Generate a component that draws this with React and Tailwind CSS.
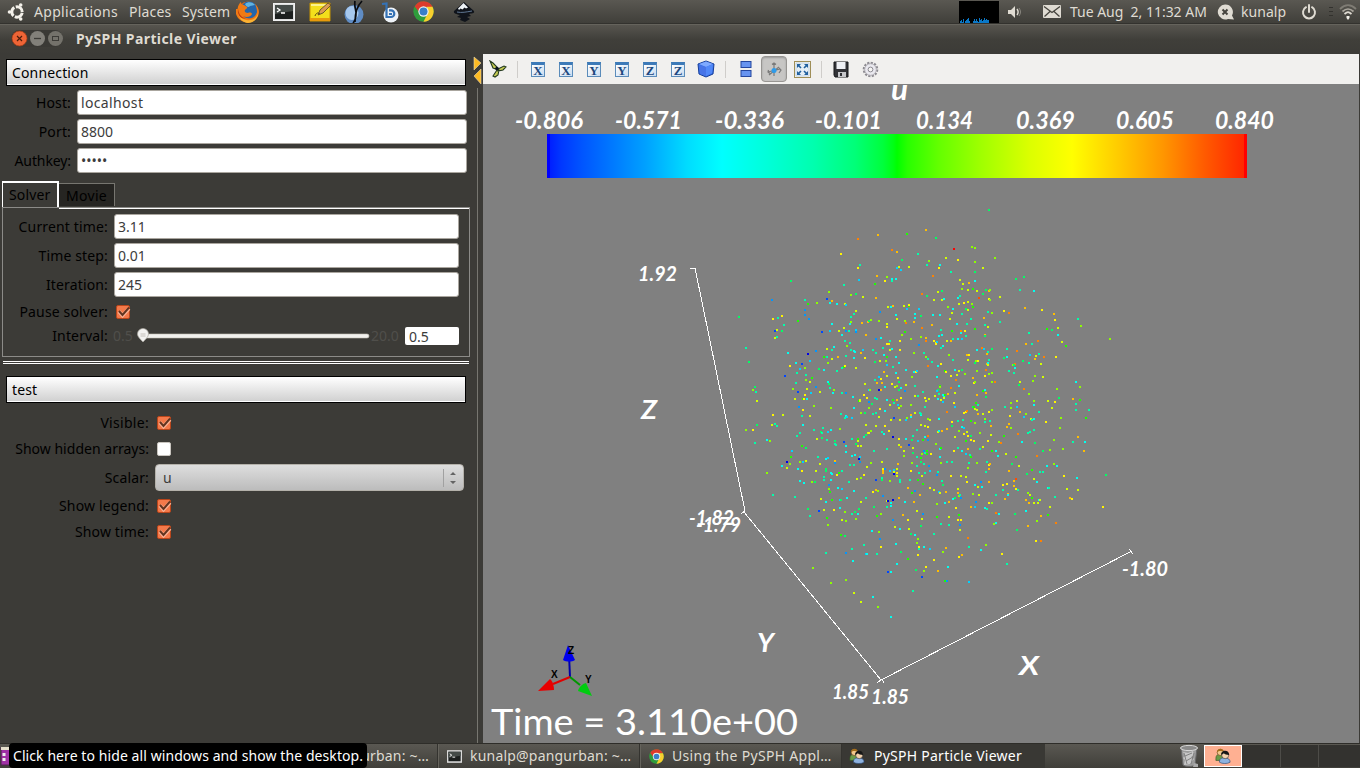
import React from "react";

const PALETTE = {
  d: "#0000e6", b: "#0046ff", a: "#0096ff", s: "#00d2ff", c: "#00fff0",
  t: "#00ffaa", e: "#00ff64", g: "#1eff00", l: "#8cff00", v: "#d2ff00",
  y: "#fff500", o: "#ffbe00", r: "#ff8200", R: "#ff4b00", X: "#ff0000",
};

/* Particle samples per tile: origin in pixels, points in thirds of a pixel. */
const TILES = [
  [730, 200, "384,117r 444,105o 531,102g 333,162y 486,150r 501,156o 564,162t 516,180e 390,195t 384,204y 387,240s 342,255t 435,252g 441,228o 465,243y 471,231l 486,237c 486,243t 498,237c 501,204s 507,201v 513,210s 537,201v 183,243e 126,300a 225,300t 234,312g 261,309l 297,276l 291,297b 306,303o 300,309c 321,312c 345,312v 348,315s 363,285l 378,282e 399,291v 438,294o 27,351e 129,357y 144,354t 156,348y 162,375t 204,363g 225,330a 225,345a 237,357a 135,393b 141,390v 156,393e 135,414v 141,411t 276,396b 300,393s 306,372c 342,384v 327,393v 348,393a 357,393t 336,405c 363,351t 372,342t 378,333v 363,366l 360,372c 378,390s 378,396a 396,369o 414,366o 417,363e 423,360l 447,363l 450,336a 474,321v 483,321c 489,318o 471,372v 471,381y 498,345c 501,357v 522,318v 537,318g 537,315y 531,327s 555,342c 555,354c 567,327s 525,363l 528,369r 552,366o 48,444t 57,486e 75,561e 69,570l 78,576t 81,603v 174,459c 165,528b 180,498y 198,489c 210,507s 216,492b 225,504l 201,519t 234,462d 240,483s 258,453a 228,525t 228,540l 240,546v 246,534g 198,549t 189,567l 204,576b 225,585y 231,567v 195,597v 219,597g 222,597y 231,597c 242,579s 258,561a 270,576v 267,507e 282,510c 282,471g 291,447v 291,471t 294,489l 306,450t 306,477v 312,441c 324,471o 348,468t 372,474c 321,513t 336,504t 342,501g 345,498y 345,423t 351,438l 360,429t 363,450t 372,453c 375,456c 393,459o 399,450s 408,405o 405,474y 429,450t 438,459t 435,486e 438,417a 453,414c 378,504v 294,546c 297,552e 300,564t 312,570l 309,579c 336,579t 348,579a 369,591c 390,600v 405,552v 402,585y 411,594y 417,570s 420,570l 435,594t 441,597t 447,531s 435,540t 441,549o 453,537y 456,549o 447,570d 453,570o 465,561c 450,483v 462,465c 459,444t 471,432y 477,432y 480,423t 480,450v 486,447c 471,471g 468,483l 471,495s 498,471c 507,489c 489,501t 462,516o 471,528v 498,519c 504,534y 486,552y 495,561v 501,558l 507,546e 507,570e 513,564c 525,573a 528,555v 546,531l 528,510c 552,516c 558,516y 561,513s 555,558t 555,588v 564,588t 513,594y 501,600o 489,600g 471,600c 516,405l 543,417l 525,396g 510,423y 510,450y 552,459l 567,435a"],
  [920, 200, "207,30e 18,90o 48,114e 102,147X 156,141l 165,144l 27,183l 78,174v 114,180y 225,174l 165,186l 21,195t 60,195c 57,204y 93,216t 165,216e 189,204v 39,228r 120,240v 129,252v 147,249o 165,243c 126,267l 144,270v 159,267g 171,273v 189,282e 198,270e 207,273o 210,270l 54,276v 66,273e 6,282r 21,288e 42,300v 66,300v 72,297c 114,294c 120,288t 177,294R 207,297y 210,300l 240,291v 288,237e 312,231e 300,270t 342,273c 117,312v 132,309y 144,306v 156,312l 159,321g 84,321l 99,327c 138,327e 144,330v 96,339v 126,342t 204,336t 216,339l 252,333y 267,339r 315,324o 366,330y 402,342o 405,360y 3,348e 39,345c 60,345c 90,357v 153,357t 192,354o 240,366t 111,372c 141,372t 36,375o 6,384r 63,390t 96,393g 123,393r 123,399c 135,393y 165,387g 195,375t 204,381v 195,405o 195,408e 138,408t 66,405c 57,408c 3,411l 18,414o 18,423r 42,423y 48,429y 48,432y 51,426s 81,423v 93,423o 99,417t 114,417c 126,417s 69,438c 63,444t 381,387g 396,390e 414,384v 414,405c 327,399t 354,423r 318,432o 336,432t 426,426v 438,438g 474,357t 483,378l 570,417l 12,459t 18,471l 24,477t 24,498r 36,486t 54,498c 63,492y 87,465l 99,480t 141,465o 147,465y 144,480v 171,450c 186,444r 192,447s 201,462o 204,456t 216,447e 165,489e 168,483l 174,483y 207,480t 201,492o 204,489c 204,495v 252,474e 261,447t 261,471c 291,453r 285,492r 279,495l 282,495e 285,504c 267,513t 282,519t 309,483e 327,489t 330,465s 348,468v 345,477o 357,462t 372,471r 363,492v 408,471y 75,513g 78,516y 105,510c 117,513v 126,510e 135,522l 93,528y 111,525v 108,540r 51,531c 171,513l 198,510r 207,522l 216,519l 195,528y 159,534o 162,549y 165,546l 216,546l 225,546r 117,558c 93,564r 60,558g 60,561l 54,570e 51,573s 57,582t 69,585c 72,591c 75,585g 84,582o 72,594v 63,600v 69,606s 54,597c 45,588v 15,594y 18,603v 27,597v 9,576t 105,579v 102,609y 189,573g 195,570c 198,579o 198,591e 171,585o 168,609g 300,546v 297,555e 312,567r 339,543l 345,528l 369,531v 327,582l 411,567l 417,594e 384,603v 405,606y 342,603v 291,603v 273,609l 468,546c 480,561l 480,600g 459,597o"],
  [730, 400, "207,21a 219,30y 252,18l 216,48t 240,48v 303,24l 333,42t 348,48c 351,51s 345,54t 366,54s 372,24c 387,3g 390,3v 393,39l 417,6a 426,12e 417,24l 405,39e 429,42t 438,39t 450,27y 465,33c 447,51v 471,0c 480,15v 492,9t 504,15s 507,24v 513,18l 492,54b 483,60v 510,60v 528,60s 531,54l 543,45o 543,51c 543,15l 555,39v 570,39t 573,45c 129,45y 159,45v 81,75e 126,75v 135,72t 141,78t 48,90l 69,90y 75,129t 111,120c 120,123l 219,75c 210,99t 201,108t 228,144e 216,138g 252,90t 279,84t 273,96e 276,99t 294,96s 303,90c 330,87l 261,117v 276,114e 291,120t 315,123e 315,132t 318,135t 342,126b 348,138c 366,117t 384,117g 378,132e 384,138v 393,138v 384,123v 402,111t 408,105e 408,75v 414,99v 417,99y 423,93l 438,78v 465,78y 456,96t 462,102c 477,93y 489,111d 507,117y 507,135v 513,141o 522,153v 537,135b 549,144v 546,120e 549,108t 561,90t 564,123s 528,117c 186,153s 183,171g 171,186d 180,192l 171,204v 156,198c 111,219l 210,186l 219,186s 228,183v 204,207c 216,213y 210,243c 222,249c 129,285t 195,291t 264,171t 270,192v 288,177c 294,174s 315,183o 315,189a 288,207e 288,213e 303,219c 306,222c 321,225y 327,219g 336,213t 282,231t 282,240t 303,240c 246,246l 255,246e 258,213v 297,255a 297,267l 300,276g 324,264c 336,267s 357,246t 372,273c 348,156c 360,195t 372,195t 366,168c 375,165c 387,177d 390,171s 390,186a 432,153t 423,189l 411,201v 402,225y 393,234l 381,237v 438,240b 456,186v 471,147t 459,207y 465,207a 459,213o 459,219o 480,213s 492,210s 492,216v 492,222d 501,207v 504,192o 501,219y 501,228v 480,243l 456,234t 456,240e 510,240t 510,246t 522,168l 546,189l 549,159e 561,171t 573,186e 561,198t 543,213y 567,219t 540,240t 564,240g 429,276y 438,270o 444,273l 459,288a 471,303v 474,303d 483,309c 483,318c 489,300d 507,294o 534,264o 555,273a 546,279g 570,285o 552,306o 525,306c 408,294t 393,306v 351,294c 330,300s 333,300e 330,324c 306,300g 273,297v 288,306c 234,327e 240,348t 267,333b 282,330v 312,330y 345,336l 336,360v 348,363l 291,354g 294,375l 366,342t 375,336e 384,342c 387,327e 378,357l 432,321e 441,348g 453,342l 471,321t 519,345o 489,360a 495,381v 510,387c 534,360y 561,333v 426,393c 447,396l 450,417a 453,441y 441,462t 402,435t 408,462s 411,462c 366,447t 369,483c 348,459a 288,459t 333,405g 345,408e 537,387v 543,402e 555,405c 564,417l 561,429l 567,441y 567,447t 564,465y 498,432c 513,456e 534,477g 501,492c 558,510e 474,516b 483,516c 249,504l 303,549l 348,540l 372,579v 393,606v 429,591c 444,621l 483,651c 549,573t"],
  [920, 400, "18,3v 63,0v 69,6s 102,9y 105,21s 15,21t 3,42t 24,57l 30,60v 57,57c 81,36r 96,66y 96,78e 114,63t 129,60t 126,81c 132,84s 132,39y 138,36y 141,33r 168,9g 174,15t 159,21e 162,21g 165,27v 171,30v 174,42o 189,42v 207,36y 216,30l 195,57l 195,66t 210,63t 213,78o 165,69l 153,63g 255,21t 273,9l 273,24l 291,3v 291,21s 342,3l 342,15c 300,36o 312,51s 318,42l 333,57v 336,60t 342,57c 357,36t 384,3v 405,6y 396,24v 378,66y 423,54l 420,84l 468,12t 468,30t 480,0g 507,30t 498,54g 270,48y 267,72o 261,81o 273,84l 324,99t 330,96t 342,90t 345,129e 306,126c 294,102r 252,108g 237,126l 243,129r 3,75v 15,78v 24,81y 15,111c 24,108r 24,120a 9,120g 48,132l 54,96v 57,93c 66,93o 81,87o 105,111v 117,93l 141,96v 132,102y 144,108y 138,123g 153,120y 162,123y 153,108e 180,99l 213,105v 204,123y 180,147t 189,141v 216,153g 228,153c 234,168c 258,162v 276,192e 288,171g 297,198v 267,213o 336,210g 321,222e 351,168r 369,153e 390,150l 360,216t 369,216t 381,198c 402,192l 411,198c 402,120l 429,147l 459,126t 474,111o 495,126c 492,153o 558,225e 471,234c 432,228y 342,237v 351,246c 3,174g 6,162l 12,153a 15,159t 21,153g 21,162g 33,162y 12,192t 27,198a 30,213s 15,219t 6,228v 51,225a 54,216t 63,189l 60,171c 60,147c 63,144g 81,186t 96,186t 102,153y 114,144t 126,153c 138,162s 144,147o 150,165t 153,171g 147,189t 144,204l 171,189l 201,186t 207,195y 210,192o 207,207o 198,216t 138,231v 141,246y 123,228v 93,228y 66,243t 9,252g 30,264y 42,270v 57,276s 60,279v 78,276o 69,255e 114,267v 114,279o 117,288l 120,285t 99,297c 105,294e 123,294a 87,306o 75,309c 51,312l 108,324y 153,321o 165,321s 168,306a 165,255c 174,261v 186,261c 183,246a 207,246o 159,282l 177,285v 207,309y 216,309l 195,324c 201,327t 228,285t 249,270t 249,255y 261,252y 282,243o 288,237R 282,258o 288,267y 294,270t 264,282o 264,285c 255,297o 318,300o 327,309o 324,279l 330,285v 336,294g 342,309v 354,309v 357,300c 360,300v 318,333c 384,264c 387,264t 405,291t 441,267v 474,270v 450,294o 456,297y 549,321y 390,321v 384,345g 363,348o 351,363l 408,369r 324,378o 291,390e 285,342e 228,339r 237,342c 222,372l 228,369c 9,342a 6,357v 51,351g 87,351v 117,345g 114,360y 123,360y 63,372t 87,375t 120,375a 120,390v 42,402t 144,414r 147,441t 183,450c 198,435l 246,462y 261,492t 348,423y 363,423r 12,441c 30,447s 69,456l 78,444o 42,480y 18,501y 12,513l 54,513o 84,501c 117,471y 126,465o 6,531b 75,543g 81,543a 147,546s 3,378e 0,285o"],
];

const PARTICLES = TILES.flatMap(([ox, oy, points]) =>
  points.split(" ").map((p) => {
    const [x, y] = p.slice(0, -1).split(",").map(Number);
    return [ox + Math.round(x / 3 - 1), oy + Math.round(y / 3 - 1), PALETTE[p.slice(-1)]];
  })
);

function UbuntuLogo() {
  return (
    <svg className="block" width="20" height="20" viewBox="0 0 20 20">
      <circle cx="11" cy="10" r="5.2" fill="none" stroke="#f4f1ea" strokeWidth="3" strokeDasharray="9.4 1.5" strokeDashoffset="-0.8" />
      <circle cx="3.500" cy="10" r="1.800" fill="#f4f1ea" />
      <circle cx="14.7" cy="3" r="1.8" fill="#f4f1ea" />
      <circle cx="14.7" cy="17" r="1.8" fill="#f4f1ea" />
    </svg>
  );
}

function Firefox() {
  return (
    <svg className="block" width="24" height="24" viewBox="0 0 24 24">
      <circle cx="12" cy="12" r="10.5" fill="#e5690f" />
      <circle cx="13" cy="10" r="8.5" fill="#2466ac" />
      <path d="M9 4c3-3 8-2 10 1-2 0-3 1-5 1-1 2-4 1-5-2z" fill="#62b4e0" />
      <path d="M1.5 9C2 5 4 2.500 5 2c0 2 1 3 3 3l3 2c1 1-1 2-2 3-1 2 1 3 3 3 2-1 4 0 4 1-1 3-6 4-9 2 4 5 13 3 14-4 0-3-1-6-2-8 5 4 5 11 1 15-5 5-14 4-18-1-2-3-3-6-2.500-9z" fill="#f07a14" />
      <path d="M2 11c1 7 7 10 12 9 4 0 7-3 8-7 0 6-5 10-10 10S2 18 2 11z" fill="#f9b233" />
      <path d="M2 9c1 6 4 9 8 9-4 2-9-2-8-9z" fill="#c33b0a" />
    </svg>
  );
}

function Terminal({ size = 22 }) {
  return (
    <svg className="block" width={size} height={size} viewBox="0 0 22 22">
      <rect x="0.500" y="2.500" width="21" height="17" fill="#ddd" stroke="#f0f0f0" />
      <rect x="2" y="4" width="18" height="14" fill="#1c1f1e" />
      <path d="M2 4h18v6L2 13z" fill="#454b48" />
      <path d="M4 7l3 2-3 2M8 12h4" fill="none" stroke="#fff" strokeWidth="1.300" />
    </svg>
  );
}

function Notes() {
  return (
    <svg className="block" width="22" height="22" viewBox="0 0 22 22">
      <path d="M1 2h20v18H1z" fill="#f3df1c" stroke="#c89500" />
      <path d="M1 17h20v3H1z" fill="#e89a0c" />
      <path d="M2 3h18v2H2z" fill="#fbf28b" />
      <path d="M9 14l2-5 8-7 3 2-8 8z" fill="#dc9c54" stroke="#514125" strokeWidth=".8" />
      <path d="M6 15c1-3 3-4 5-2" stroke="#5b4b12" fill="none" />
    </svg>
  );
}

function BlueSphere() {
  return (
    <svg className="block" width="20" height="24" viewBox="0 0 20 24">
      <ellipse cx="10" cy="14.500" rx="9.500" ry="9.500" fill="#5f8cc4" />
      <ellipse cx="8" cy="13" rx="6.500" ry="7" fill="#a6c8ee" />
      <path d="M11 1c-1 5 1 9 1 12 0 5-1 8-3 10M18 1c-5 5-7 14-7 21" fill="none" stroke="#080b10" strokeWidth="1.700" />
    </svg>
  );
}

function Bluefish() {
  return (
    <svg className="block" width="18" height="22" viewBox="0 0 18 22">
      <circle cx="10" cy="14" r="7.500" fill="#eef2f7" />
      <path d="M1 3l4.500-.5V16h4.500a3.300 3.300 0 0 0 0-6.600H8M8 13h3" fill="none" stroke="#3572b5" strokeWidth="2.200" />
    </svg>
  );
}

function Chrome({ size = 21 }) {
  return (
    <svg className="block" width={size} height={size} viewBox="0 0 20 20">
      <circle cx="10" cy="10" r="9.700" fill="#2f9d3c" />
      <path d="M1.600 5.200A9.700 9.700 0 0 1 18.700 5.600L10 6 7 12z" fill="#dd3b2c" />
      <path d="M18.600 5.500A9.700 9.700 0 0 1 10 19.700l4-8-1-6.200z" fill="#f8cf2e" />
      <circle cx="10" cy="10" r="4.900" fill="#f5f6f4" />
      <circle cx="10" cy="10" r="3.800" fill="#397fc8" />
    </svg>
  );
}

function Inkscape() {
  return (
    <svg className="block" width="22" height="22" viewBox="0 0 22 22">
      <path d="M11 1l10 9c1 3-3 2-5 3l2 2-4 1 3 2-5 3-5-2 1-2-4-1 3-2c-3-1-7-1-6-4z" fill="#10141b" />
      <path d="M10.500 2l4.500 4.500-2 1-1.500-1-2 2-2-1L6 9l-1-1.500z" fill="#eef3f7" />
      <path d="M4 11c5 1 9 0 15-1" stroke="#607793" fill="none" />
    </svg>
  );
}

function People({ size = 18 }) {
  return (
    <svg className="block" width={size} height={size} viewBox="0 0 18 18">
      <path d="M1 12c0-4 2-5 5-5s5 2 5 5v2H1z" fill="#6b9a47" stroke="#355126" strokeWidth=".7" />
      <circle cx="6" cy="5" r="3.500" fill="#f2c88c" stroke="#5b3a13" strokeWidth=".7" />
      <path d="M2 5c0-5 7-6 8-1-3-1-6-1-8 1z" fill="#a46d1b" />
      <path d="M5 16c0-4 2-5 6-5s6 2 6 5c-3 2-9 2-12 0z" fill="#8eb2df" stroke="#29466f" strokeWidth=".7" />
      <circle cx="11.500" cy="8" r="4" fill="#f3d2ad" stroke="#222" strokeWidth=".6" />
      <path d="M7 8c-1-6 9-7 9 0-3 0-5-1-6-2-1 1-2 1-3 2z" fill="#161616" />
    </svg>
  );
}

function Trash() {
  return (
    <svg className="block" width="20" height="24" viewBox="0 0 20 24">
      <path d="M2 4h16l-2 17c-3 2-9 2-12 0z" fill="#9b9b9b" stroke="#666" />
      <ellipse cx="10" cy="4" rx="8.500" ry="2.600" fill="#8a8a8a" stroke="#d8d8d8" />
      <path d="M4 8l5 1 5-2 1 4-3 2 3 2-4 5-6 1 1-5-2-2 2-2z" fill="#c8c8c8" />
      <path d="M5 9l3 11M15 9l-3 11M6 12l7-3M7 17l7-4" stroke="#808080" />
      <path d="M15 19l4 1v3h-5z" fill="#aaa" />
    </svg>
  );
}

function CpuGraph() {
  return (
    <svg className="block bg-black" width="40" height="22" viewBox="0 0 40 22" shapeRendering="crispEdges">
      <path d="M1 22v-2h1v-1h1v2h1v-3h1v4zM6 22v-2h1v-1h1v-1h1v-1h1v3h1v2zM14 22v-2h1v-2h1v2h1v-2h1v2h1v1h1v-4h1v2h1v-1h1v2h1v-1h1v-2h1v2h1v-1h1v1h2v3z" fill="#0a78c8" />
    </svg>
  );
}

function Volume() {
  return (
    <svg className="block" width="14" height="14" viewBox="0 0 14 14">
      <path d="M1 5h3l4-4v12L4 9H1z" fill="#dfdbd2" />
      <path d="M10 4c1.500 2 1.500 4 0 6" fill="none" stroke="#dfdbd2" strokeWidth="1.400" />
      <path d="M12 3c2 3 2 5 0 8" fill="none" stroke="#8b8880" />
    </svg>
  );
}

function Mail() {
  return (
    <svg className="block" width="18" height="13" viewBox="0 0 18 13">
      <rect width="18" height="13" rx="1" fill="#dfdbd2" />
      <path d="M1 1.500l8 6 8-6M1.500 11.500L7 6.500M16.500 11.500L11 6.500" fill="none" stroke="#45433d" strokeWidth="1.300" />
    </svg>
  );
}

function ChatOffline() {
  return (
    <svg className="block" width="18" height="16" viewBox="0 0 18 16">
      <path d="M8 .5A7.500 7.500 0 1 0 11 15l6 .5-2-4A7.500 7.500 0 0 0 8 .5z" fill="#dfdbd2" />
      <path d="M5.500 5.500l5 5M10.500 5.500l-5 5" stroke="#45433d" strokeWidth="2" />
    </svg>
  );
}

function Power() {
  return (
    <svg className="block" width="16" height="16" viewBox="0 0 16 16">
      <path d="M5 3.200a6 6 0 1 0 6 0M8 1v7" fill="none" stroke="#dfdbd2" strokeWidth="2" strokeLinecap="round" />
    </svg>
  );
}

function Wifi() {
  return (
    <svg className="block" width="18" height="16" viewBox="0 0 18 16">
      <path d="M1 5c5-5 11-5 16 0" fill="none" stroke="#7f7c74" strokeWidth="1.800" />
      <path d="M3.500 7.500c4-3.500 7-3.500 11 0" fill="none" stroke="#a8a49b" strokeWidth="1.800" />
      <path d="M5.500 10c3-2.500 4-2.500 7 0" fill="none" stroke="#dfdbd2" strokeWidth="1.800" />
      <path d="M7.500 12h3v2l-1.500 2-1.500-2z" fill="#f2efe8" />
    </svg>
  );
}

function TopPanel() {
  return (
    <header className="flex h-6 items-center overflow-hidden border-b border-[#33322e] bg-linear-to-b from-[#5a5852] to-[#403f3a] text-[14px] text-[#dfdbd2]">
      <div className="ml-[6px] w-[28px]"><UbuntuLogo /></div>
      <span className="w-[95px] tracking-[0.3px]">Applications</span>
      <span className="w-[53px] tracking-[0.2px]">Places</span>
      <span className="w-[54px] tracking-[0.1px]">System</span>
      <div className="w-[37px]"><Firefox /></div>
      <div className="w-[36px]"><Terminal /></div>
      <div className="w-[35px]"><Notes /></div>
      <div className="w-[37px]"><BlueSphere /></div>
      <div className="w-[32px]"><Bluefish /></div>
      <div className="w-[40px]"><Chrome /></div>
      <Inkscape />
      <div className="ml-[484px] w-[48px]"><CpuGraph /></div>
      <div className="w-[36px]"><Volume /></div>
      <div className="w-[27px]"><Mail /></div>
      <span className="w-[147px] whitespace-pre tracking-[-0.02px]">Tue Aug  2, 11:32 AM</span>
      <div className="w-[24px]"><ChatOffline /></div>
      <span className="w-[60px] tracking-[0.05px]">kunalp</span>
      <div className="w-[28px]"><Power /></div>
      <div className="mr-[6px] flex h-[9px] w-[4px] flex-col justify-between">
        <i className="h-px bg-[#33322e]" /><i className="h-px bg-[#33322e]" /><i className="h-px bg-[#33322e]" />
      </div>
      <Wifi />
    </header>
  );
}

function TitleBar() {
  return (
    <div className="flex h-[30px] items-center border-t border-[#65635c] bg-linear-to-b from-[#57554f] via-[#403f3a] to-[#3c3b37] pb-[2px]">
      <svg className="mr-[13px] ml-[11px] block" width="52" height="18" viewBox="0 0 52 18">
        <rect width="52" height="17" rx="8.500" fill="#3a3935" />
        <circle cx="8.500" cy="8.500" r="7.500" fill="#ee6436" stroke="#a73d16" strokeWidth=".7" />
        <path d="M6 6l5 5M11 6l-5 5" stroke="#4c1e0c" strokeWidth="1.200" />
        <circle cx="26.500" cy="8.500" r="7.500" fill="#82807a" />
        <path d="M23 8.500h7" stroke="#3c3b37" strokeWidth="1.300" />
        <circle cx="44.500" cy="8.500" r="7.500" fill="#74726b" />
        <rect x="41.500" y="6.500" width="6" height="4" fill="none" stroke="#3c3b37" />
      </svg>
      <h1 className="text-[14px] font-bold tracking-[0.4px] whitespace-nowrap text-[#dfdbd2]">PySPH Particle Viewer</h1>
    </div>
  );
}

function SectionHeader({ children }) {
  return (
    <div className="ml-[6px] flex h-[27px] w-[460px] items-center border border-black bg-linear-to-b from-white to-[#cfcfcf] pl-[5px] text-black shadow-[inset_0_-1px_0_#ffffff]">
      {children}
    </div>
  );
}

function Field({ label, value, labelClass, inputClass }) {
  return (
    <div className="mb-[4px] flex h-[25px] items-center">
      <label className={"shrink-0 pr-[6px] text-right text-black " + labelClass}>{label}</label>
      <div className={"flex h-[25px] items-center rounded-[3px] border border-[#aaa69f] bg-white pl-[3px] text-[#3c3c3c] " + inputClass}>{value}</div>
    </div>
  );
}

function Check({ on = true }) {
  return (
    <svg className="block" width="16" height="16" viewBox="0 0 16 16">
      <rect x="1.500" y="1.500" width="13" height="13" rx="1.500" fill={on ? "#f4794a" : "#ffffff"} stroke={on ? "#b9461b" : "#c9c5bf"} />
      {on && <path d="M4 7.500l3.500 4L14 4.500" fill="none" stroke="#fbb397" strokeWidth="3.600" />}
      {on && <path d="M4 7l3.500 4L14 3.500" fill="none" stroke="#63341f" strokeWidth="2" />}
    </svg>
  );
}

function CheckRow({ label, on, className }) {
  return (
    <div className={"flex items-center " + className}>
      <label className="w-[149px] text-right text-black">{label}</label>
      <div className="ml-[7px]"><Check on={on} /></div>
    </div>
  );
}

function Sidebar() {
  return (
    <aside className="h-[689px] w-[473px] shrink-0 pt-[5px] text-[14px] tracking-[0.15px] whitespace-nowrap">
      <SectionHeader>Connection</SectionHeader>
      <div className="pt-[4px]">
        <Field label="Host:" value="localhost" labelClass="w-[77px]" inputClass="w-[390px] tracking-[0.35px]" />
        <Field label="Port:" value="8800" labelClass="w-[77px]" inputClass="w-[390px] tracking-[0px]" />
        <Field label="Authkey:" value="•••••" labelClass="w-[77px] tracking-[-0.1px]" inputClass="w-[390px] tracking-[0px]" />
      </div>
      <div className="mt-[8px] ml-[2px] flex h-[26px] items-end">
        <div className="h-[26px] w-[57px] border-t-2 border-r-2 border-l border-white pt-[5px] pl-[6px] text-black">Solver</div>
        <div className="mb-px h-[23px] w-[56px] border-t border-r border-[#777670] bg-[#262522] pt-[5px] pl-[7px] tracking-[0.3px] text-black">Movie</div>
      </div>
      <div className="ml-[2px] h-[150px] w-[468px] border border-[#8c8b88]">
        <div className="ml-[56px] h-px bg-white" />
        <div className="-mb-px pt-[5px]">
          <Field label="Current time:" value="3.11" labelClass="w-[111px]" inputClass="w-[345px] tracking-[0px]" />
          <Field label="Time step:" value="0.01" labelClass="w-[111px]" inputClass="w-[345px] tracking-[0px]" />
          <Field label="Iteration:" value="245" labelClass="w-[111px]" inputClass="w-[345px] tracking-[0px]" />
        </div>
        <div className="flex h-[24px] items-center">
          <label className="w-[105px] text-right text-black">Pause solver:</label>
          <div className="ml-[7px]"><Check /></div>
        </div>
        <div className="flex h-[24px] items-center tracking-[0px]">
          <label className="w-[105px] text-right tracking-[0.15px] text-black">Interval:</label>
          <span className="ml-[5px] w-[22px] text-[#504f4b]">0.5</span>
          <svg className="block" width="236" height="18" viewBox="0 0 236 18">
            <rect x="6" y="7" width="228" height="4" rx="2" fill="#f2f1ee" stroke="#c2bfb7" strokeWidth=".6" />
            <path d="M2.500 7a5.500 5.500 0 0 1 11 0c0 3-3 5-5.500 8C5.500 12 2.500 10 2.500 7z" fill="#f3f2f0" stroke="#aaa79f" strokeWidth=".7" />
            <path d="M5.500 7h5M5.500 9h5" stroke="#b8b4ac" strokeWidth=".8" />
          </svg>
          <span className="w-[34px] text-[#504f4b]">20.0</span>
          <div className="flex h-[18px] w-[54px] items-center rounded-[2px] bg-white pt-px pl-[4px] text-[#3c3c3c]">0.5</div>
        </div>
      </div>
      <div className="mt-[4px] mb-[12px] ml-[3px] h-[3px] w-[466px] border-y border-white" />
      <SectionHeader>test</SectionHeader>
      <div className="pt-[7px]">
        <CheckRow label="Visible:" on className="h-[26px] tracking-[0.3px]" />
        <CheckRow label="Show hidden arrays:" on={false} className="h-[26px] tracking-[0.02px]" />
        <div className="mt-[2px] mb-[2px] flex h-[27px] items-center">
          <label className="w-[149px] text-right text-black">Scalar:</label>
          <div className="ml-[6px] flex h-[27px] w-[309px] items-center rounded-[4px] border border-[#b4b1aa] bg-linear-to-b from-[#dedede] to-[#bcbcbc] pl-[7px] text-[#3c3c3c]">
            <span className="flex-1">u</span>
            <svg className="block" width="20" height="20" viewBox="0 0 20 20">
              <path d="M.5 1v18" stroke="#a1a1a1" />
              <path d="M7 7l3-3 3 3zM7 13l3 3 3-3z" fill="#646464" />
            </svg>
          </div>
        </div>
        <CheckRow label="Show legend:" on className="h-[26px]" />
        <CheckRow label="Show time:" on className="h-[26px]" />
      </div>
    </aside>
  );
}

function Splitter() {
  return (
    <svg className="block shrink-0" width="10" height="689" viewBox="0 0 10 689">
      <path d="M4.500 34v655" stroke="#777670" />
      <path d="M1 3l7 6-7 7z" fill="#fdbb24" stroke="#e9d8ae" strokeWidth=".6" />
      <path d="M8 15L1 22l7 8z" fill="#fdbb24" stroke="#e9d8ae" strokeWidth=".6" />
    </svg>
  );
}

function AxisButton({ letter }) {
  return (
    <div className="flex w-[28px] justify-center">
      <div className="flex h-[15px] w-[14px] items-center justify-center border border-t-[3px] border-[#5b8cba] border-t-[#3d7ab8] bg-linear-to-br from-white to-[#c9dcf0] font-['Liberation_Serif',serif] text-[13px] leading-none font-bold text-[#20487e]">
        {letter}
      </div>
    </div>
  );
}

function Toolbar() {
  return (
    <div className="flex h-[30px] items-center bg-[#f1f0ee]">
      <svg className="ml-[6px] block" width="18" height="18" viewBox="0 0 18 18">
        <path d="M1 1l3 2 4 4-1 2-3-1zM9 9l6-3 2 1-3 3-5 1zM8 10l-4 6 2 1 3-2 1-5z" fill="#c7cc54" stroke="#22391f" strokeWidth="1.100" />
        <circle cx="8" cy="8.500" r="1.800" fill="#08121d" />
      </svg>
      <div className="mr-[6px] ml-[10px] h-[17px] w-px bg-[#cfcdca]" />
      <AxisButton letter="X" /><AxisButton letter="X" />
      <AxisButton letter="Y" /><AxisButton letter="Y" />
      <AxisButton letter="Z" /><AxisButton letter="Z" />
      <svg className="ml-[5px] block" width="18" height="18" viewBox="0 0 18 18">
        <path d="M1 4l8-3 8 3-1 10-7 3-7-3z" fill="#3972e8" stroke="#173e99" />
        <path d="M2 4l7-2.500L16 4 9 7z" fill="#7faaff" />
        <path d="M9 7l7-3-1 9-6 3z" fill="#5188f8" />
        <path d="M2 5l7 2v9l-6-2z" fill="#4774e7" />
      </svg>
      <div className="mr-[14px] ml-[10px] h-[17px] w-px bg-[#cfcdca]" />
      <svg className="block" width="12" height="16" viewBox="0 0 12 16">
        <rect x="1" y=".5" width="10" height="6" fill="#6794f0" stroke="#24479e" />
        <rect x="1" y="9.500" width="10" height="6" fill="#6794f0" stroke="#24479e" />
      </svg>
      <div className="ml-[9px] flex h-[26px] w-[26px] items-center justify-center rounded-[4px] border border-[#979592] bg-[#c7c6c4] shadow-[inset_0_1px_2px_#999]">
        <svg className="block" width="18" height="18" viewBox="0 0 18 18">
          <path d="M9 3v13M3 12l12-3M4 15l10-8M7 4.500L9 3l2 1.500M3.500 10L3 12l2 1.500M14 8l2 2-2 3" fill="none" stroke="#7a7a7a" strokeWidth="1.200" />
          <circle cx="9" cy="10.500" r="2.500" fill="#2e9bea" />
        </svg>
      </div>
      <svg className="ml-[7px] block" width="17" height="17" viewBox="0 0 17 17">
        <rect x=".5" y=".5" width="16" height="16" fill="#f6f5ed" stroke="#9f8e57" />
        <path d="M2 2h13v13H2z" fill="#e4eef6" stroke="#c3d3e2" />
        <path d="M3 7V3h4zM10 3h4v4zM3 10v4h4zM14 10v4h-4z" fill="#21609e" />
        <path d="M4 4l3 3M13 4l-3 3M4 13l3-3M13 13l-3-3" stroke="#21609e" strokeWidth="1.600" />
      </svg>
      <div className="mr-[12px] ml-[10px] h-[17px] w-px bg-[#cfcdca]" />
      <svg className="-ml-px block" width="17" height="17" viewBox="0 0 17 17">
        <path d="M1 1h14v15H2l-1-2z" fill="#323337" stroke="#17181b" />
        <rect x="3.500" y="1" width="9" height="7" fill="#eef0f4" />
        <rect x="5" y="11" width="8" height="5" fill="#c6c7ca" />
        <rect x="7" y="12" width="2" height="3" fill="#2c2d31" />
      </svg>
      <svg className="ml-[12px] block" width="17" height="17" viewBox="0 0 17 17">
        <circle cx="8.500" cy="8.500" r="6.800" fill="none" stroke="#8d8b91" strokeWidth="2" strokeDasharray="2.200 1.360" />
        <circle cx="8.500" cy="8.500" r="5.800" fill="#eae9ef" stroke="#a3a1a8" strokeWidth=".8" />
        <circle cx="8.500" cy="8.500" r="2.400" fill="#f5f4f2" stroke="#8c8a91" />
      </svg>
    </div>
  );
}

const LEGEND = [
  ["-0.806", 515, 68], ["-0.571", 615, 67], ["-0.336", 715, 69], ["-0.101", 815, 67],
  ["0.134", 916, 57], ["0.369", 1016, 59], ["0.605", 1116, 58], ["0.840", 1215, 59],
];

const STOPS = [
  [0, "#0000ff"], [0.4, "#0000ff"], [0.5, "#0020ff"], [2, "#0037ff"], [5, "#0055ff"], [8, "#006eff"], [14, "#00a0ff"], [20, "#00dcff"],
  [25, "#00ffff"], [31, "#00ffdc"], [38, "#00ffaf"], [44, "#00ff78"], [48, "#00ff3c"], [49.5, "#00ff14"], [50, "#00ff00"],
  [51.5, "#28ff00"], [56, "#64ff00"], [62, "#a0ff00"], [69, "#dcff00"], [75, "#ffff00"], [82, "#ffc800"],
  [88, "#ff9600"], [94, "#ff5a00"], [99.5, "#ff2800"], [99.6, "#ff0000"], [100, "#ff0000"],
];

function Scene() {
  const label = { fontFamily: "Lato, sans-serif", fontWeight: 700, fontStyle: "italic", fill: "#fff" };
  return (
    <svg className="block bg-[#808080]" width="876" height="659" viewBox="483 84 876 659">
      <defs>
        <linearGradient id="scale" x1="0" x2="1">
          {STOPS.map(([o, c]) => <stop key={o} offset={o + "%"} stopColor={c} />)}
        </linearGradient>
      </defs>
      <g {...label}>
        <text x="891" y="100" fontSize="28" textLength="17" lengthAdjust="spacingAndGlyphs">u</text>
        {LEGEND.map(([t, x, w]) => (
          <text key={t} x={x} y="128.500" fontSize="24" textLength={w} lengthAdjust="spacingAndGlyphs">{t}</text>
        ))}
      </g>
      <rect x="547" y="134" width="700" height="44" fill="url(#scale)" />
      <g shapeRendering="crispEdges">
        {PARTICLES.map(([x, y, c], i) => <rect key={i} x={x} y={y} width="2" height="2" fill={c} />)}
        <path d="M690 268.500h6M695 268l50 243M741 514l4-3M744 512l137 168M877 683l5-4 2 4M881 680l251-129M1129 549l4 5" fill="none" stroke="#fff" />
      </g>
      <g {...label} fontSize="20">
        <text x="638" y="281" textLength="39" lengthAdjust="spacingAndGlyphs">1.92</text>
        <text x="689" y="525" textLength="45" lengthAdjust="spacingAndGlyphs">-1.82</text>
        <text x="696" y="531.500" textLength="45" lengthAdjust="spacingAndGlyphs">-1.79</text>
        <text x="1122" y="575.500" textLength="46" lengthAdjust="spacingAndGlyphs">-1.80</text>
        <text x="832" y="699" textLength="37" lengthAdjust="spacingAndGlyphs">1.85</text>
        <text x="871" y="704" textLength="38" lengthAdjust="spacingAndGlyphs">1.85</text>
      </g>
      <g {...label} fontSize="26">
        <text x="641" y="418.500" textLength="16" lengthAdjust="spacingAndGlyphs">Z</text>
        <text x="757" y="652" textLength="17" lengthAdjust="spacingAndGlyphs">Y</text>
        <text x="1019" y="675" textLength="20" lengthAdjust="spacingAndGlyphs">X</text>
      </g>
      <text x="491" y="735" fontSize="37" fill="#fff" fontFamily="Lato, sans-serif" textLength="307" lengthAdjust="spacingAndGlyphs">Time = 3.110e+00</text>
      <g fontFamily="Liberation Sans, sans-serif" fontWeight="700" fontSize="10">
        <path d="M570 677l-1-22" stroke="#0000a8" strokeWidth="2" />
        <path d="M570 677l-17 7" stroke="#e00000" strokeWidth="2" />
        <path d="M570 677l10 8" stroke="#009600" strokeWidth="2" />
        <path d="M568 645l7 15c-3 2-9 2-12 0z" fill="#0000ee" />
        <path d="M538 691l12-12c3 2 4 8 4 11z" fill="#e80000" />
        <path d="M592 696l-14-5c1-4 4-7 8-8z" fill="#00cc10" />
        <text x="568" y="654">Z</text>
        <text x="551" y="678">X</text>
        <text x="585" y="683">Y</text>
      </g>
    </svg>
  );
}

function Taskbar() {
  return (
    <footer className="relative flex h-[25px] items-center border-t border-[#2e2d29] bg-linear-to-b from-[#5a5852] to-[#403f3a] text-[14px] whitespace-nowrap text-[#dfdbd2]">
      <svg className="block" width="20" height="20" viewBox="0 0 20 20">
        <rect x="1" y="2" width="16" height="17" fill="#9f30a5" stroke="#4c214d" />
        <rect x="1" y="1" width="16" height="3" fill="#e6e0cd" />
        <path d="M4 7v3M4 12v3" stroke="#eee" strokeWidth="3" />
      </svg>
      <div className="flex h-full w-[418px] items-center justify-end border-r border-[#34332f] pr-[8px] tracking-[0.2px]">kunalp@pangurban: ~…</div>
      <div className="flex h-full w-[202px] items-center border-r border-l border-l-[#65635c] border-r-[#34332f] pl-[8px]">
        <Terminal size={15} /><span className="ml-[8px] tracking-[0.2px]">kunalp@pangurban: ~…</span>
      </div>
      <div className="flex h-full w-[202px] items-center border-r border-l border-l-[#65635c] border-r-[#34332f] pl-[8px]">
        <Chrome size={15} /><span className="ml-[8px] tracking-[0.3px]">Using the PySPH Appl…</span>
      </div>
      <div className="flex h-full w-[203px] items-center bg-[#393834] pl-[7px] text-white">
        <People size={16} /><span className="ml-[9px] tracking-[0.25px]">PySPH Particle Viewer</span>
      </div>
      <div className="ml-[134px]"><Trash /></div>
      <div className="ml-[5px] flex h-[22px] w-[38px] items-center justify-center border border-white bg-[#ffb092]"><People size={16} /></div>
      <div className="h-[22px] w-[39px] border-r border-[#4d4c48] bg-[#33322f]" />
      <div className="h-[22px] w-[38px] border-r border-[#4d4c48] bg-[#33322f]" />
      <div className="h-[22px] flex-1 bg-[#33322f]" />
      <div className="absolute top-[-1px] left-[9px] flex h-[25px] w-[358px] items-center rounded-[4px] bg-black pl-[4px] tracking-[0.08px] text-white">
        Click here to hide all windows and show the desktop.
      </div>
    </footer>
  );
}

export default function App() {
  return (
    <div className="h-[768px] w-[1360px] overflow-hidden bg-[#3c3b37] font-['Noto_Sans',sans-serif] leading-none">
      <TopPanel />
      <TitleBar />
      <main className="flex h-[689px]">
        <Sidebar />
        <Splitter />
        <section className="w-[876px]">
          <Toolbar />
          <Scene />
        </section>
      </main>
      <Taskbar />
    </div>
  );
}
